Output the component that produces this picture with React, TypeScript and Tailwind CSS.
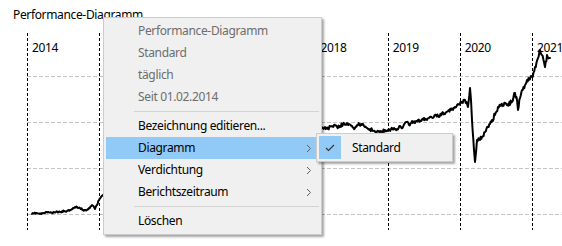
import React from "react";

const YEARS = ["2014", "2015", "2016", "2017", "2018", "2019", "2020", "2021"];
const COL = 72.14;

const KEY: [number, number][] = [
  [32, 214], [36, 213], [40, 214], [44, 213], [48, 212], [52, 213], [56, 212], [60, 212], [64, 211], [67, 211],
  [70, 210], [73, 208], [77, 207], [80, 208], [83, 210], [87, 210], [89, 208], [92, 205], [94, 207], [95, 209],
  [97, 205], [99, 200], [101, 197], [103, 195], [130, 190], [160, 180], [200, 166], [250, 150], [290, 138],
  [310, 132], [322, 128], [325, 127], [328, 129], [331, 126], [334, 125], [337, 127], [340, 126], [343, 124],
  [346, 125], [349, 124], [352, 126], [355, 128], [358, 125], [361, 124], [364, 126], [367, 128], [370, 129],
  [373, 131], [376, 133], [379, 131], [382, 132], [385, 130], [388, 131], [391, 129], [394, 128], [397, 129],
  [400, 126], [403, 127], [406, 122], [409, 125], [412, 121], [415, 123], [418, 120], [421, 121], [424, 118],
  [427, 120], [430, 117], [433, 118], [436, 115], [439, 117], [442, 113], [445, 114], [448, 111], [451, 110],
  [455, 107], [458, 104], [462, 102], [465, 100], [468, 107], [470, 88], [471, 100], [472, 120], [474, 150],
  [475, 162], [477, 140], [480, 140], [482, 137], [485, 132], [488, 127], [490, 124], [492, 120], [495, 115],
  [498, 107], [501, 106], [505, 103], [508, 104], [512, 102], [515, 93], [517, 100], [518, 110], [520, 98],
  [522, 90], [525, 85], [527, 80], [530, 79], [532, 77], [535, 67], [538, 58], [540, 50], [542, 55], [544, 62],
  [545, 67], [547, 55], [549, 58], [550, 58],
];

function buildPoints(): [number, number][] {
  let seed = 11;
  const rnd = () => {
    seed = (seed * 16807) % 2147483647;
    return seed / 2147483647 - 0.5;
  };
  const out: [number, number][] = [];
  for (let i = 0; i < KEY.length - 1; i++) {
    const [x0, y0] = KEY[i];
    const [x1, y1] = KEY[i + 1];
    const steps = Math.max(1, Math.round((x1 - x0) / 0.7));
    for (let s = 0; s < steps; s++) {
      const t = s / steps;
      const x = x0 + (x1 - x0) * t;
      const amp = x > 476 ? 5 : x > 320 ? 3.5 : 1.5;
      const y = y0 + (y1 - y0) * t + (s === 0 ? 0 : rnd() * amp);
      out.push([x, y]);
    }
  }
  out.push(KEY[KEY.length - 1]);
  return out;
}

function Chevron() {
  return (
    <svg width="6" height="9" viewBox="0 0 6 9" className="block">
      <polyline points="1,1 4.5,4.5 1,8" fill="none" stroke="#606060" strokeWidth="1" />
    </svg>
  );
}

function Item({
  label,
  disabled,
  active,
  sub,
}: {
  label: string;
  disabled?: boolean;
  active?: boolean;
  sub?: boolean;
}) {
  return (
    <div
      className={`mx-[2px] flex h-[22px] items-center justify-between pl-[32px] pr-[7px] ${
        active ? "bg-[#91c9f7]" : ""
      } ${disabled ? "text-[#6d6d6d]" : "text-black"}`}
    >
      <span>{label}</span>
      {sub ? <Chevron /> : null}
    </div>
  );
}

function Sep() {
  return <div className="my-[3px] ml-[30px] mr-[2px] h-px bg-[#d4d4d4]" />;
}

export default function App() {
  const pts = buildPoints();
  const path = pts
    .map((p, i) => `${i === 0 ? "M" : "L"}${(p[0] - 27).toFixed(2)},${(p[1] - 33).toFixed(2)}`)
    .join(" ");
  return (
    <div
      className="relative h-[246px] w-[562px] overflow-hidden bg-white text-[12px] leading-[16px] tracking-[-0.35px] text-black"
      style={{ fontFamily: '"Segoe UI", "Noto Sans", sans-serif' }}
    >
      <div className="flex flex-col">
        <div className="ml-[13px] mt-[7px] h-[16px]">Performance-Diagramm</div>
        <div className="relative ml-[27px] mt-[10px] h-[197px] w-[535px]">
          <svg className="absolute inset-0" width="535" height="197" viewBox="0 0 535 197">
            {[43, 89, 135, 181].map((y) => (
              <line
                key={y}
                x1="0"
                x2="535"
                y1={y + 0.5}
                y2={y + 0.5}
                stroke="#c4c4c4"
                strokeWidth="1"
                strokeDasharray="4 2"
              />
            ))}
            {YEARS.map((y, i) => (
              <line
                key={y}
                x1={Math.round(i * COL) + 0.5}
                x2={Math.round(i * COL) + 0.5}
                y1="0"
                y2="197"
                stroke="#000"
                strokeWidth="1"
                strokeDasharray="3 2"
              />
            ))}
            <path d={path} fill="none" stroke="#000" strokeWidth="2" strokeLinejoin="round" strokeLinecap="round" />
          </svg>
          <div className="relative flex pt-[7px]">
            {YEARS.map((y) => (
              <div key={y} className="w-[72.14px] shrink-0 pl-[5px]">
                {y}
              </div>
            ))}
          </div>
        </div>
      </div>

      <div className="absolute left-[103px] top-[17px] w-[219px] border border-[#cccccc] bg-[#f0f0f0] py-[2px] shadow-[2px_2px_2px_rgba(0,0,0,0.35)]">
        <Item label="Performance-Diagramm" disabled />
        <Item label="Standard" disabled />
        <Item label="täglich" disabled />
        <Item label="Seit 01.02.2014" disabled />
        <Sep />
        <Item label="Bezeichnung editieren..." />
        <Item label="Diagramm" active sub />
        <Item label="Verdichtung" sub />
        <Item label="Berichtszeitraum" sub />
        <Sep />
        <Item label="Löschen" />
      </div>

      <div className="absolute left-[316px] top-[133px] w-[137px] border border-[#cccccc] bg-[#f0f0f0] p-[2px] shadow-[2px_2px_2px_rgba(0,0,0,0.35)]">
        <div className="flex h-[23px] items-center">
          <div className="flex h-[23px] w-[22px] items-center justify-center bg-[#91c9f7]">
            <svg width="10" height="8" viewBox="0 0 10 8">
              <polyline points="1,4 3.5,6.5 9,1" fill="none" stroke="#333" strokeWidth="1.1" />
            </svg>
          </div>
          <span className="ml-[11px]">Standard</span>
        </div>
      </div>
    </div>
  );
}
